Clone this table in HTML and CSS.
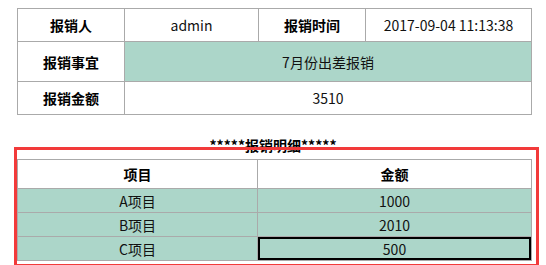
FILE: index.html
```html
<!DOCTYPE html>
<html lang="zh">
<head>
<meta charset="utf-8">
<title>报销单</title>
<link rel="stylesheet" href="styles.css">
</head>
<body>
<div class="page">
  <table class="info">
    <colgroup>
      <col class="c1"><col class="c2"><col class="c3"><col class="c4">
    </colgroup>
    <tr class="r-short">
      <th>报销人</th>
      <td>admin</td>
      <th>报销时间</th>
      <td>2017-09-04 11:13:38</td>
    </tr>
    <tr class="r-tall">
      <th>报销事宜</th>
      <td colspan="3" class="teal">7月份出差报销</td>
    </tr>
    <tr class="r-short">
      <th>报销金额</th>
      <td colspan="3">3510</td>
    </tr>
  </table>

  <div class="title">*****报销明细*****</div>

  <div class="frame">
    <table class="detail">
      <colgroup>
        <col class="d1"><col class="d2">
      </colgroup>
      <tr class="head">
        <th>项目</th>
        <th>金额</th>
      </tr>
      <tr class="row">
        <td>A项目</td>
        <td>1000</td>
      </tr>
      <tr class="row">
        <td>B项目</td>
        <td>2010</td>
      </tr>
      <tr class="row">
        <td>C项目</td>
        <td class="selected">500</td>
      </tr>
    </table>
  </div>
</div>
</body>
</html>
```

FILE: styles.css
```css
html, body {
  margin: 0;
  padding: 0;
  background: #fff;
}

body {
  font-family: "Noto Sans CJK SC", "Noto Sans", sans-serif;
  font-size: 14px;
  color: #111;
}

.page {
  padding: 8px 0 0 14px;
}

table {
  border-collapse: collapse;
  table-layout: fixed;
}

th, td {
  border: 1px solid #aaa;
  padding: 0;
  text-align: center;
  vertical-align: middle;
  line-height: 20px;
}

th {
  font-weight: bold;
  color: #000;
}

.info {
  margin-left: 3px;
  width: 514px;
}

.info .c1 { width: 107px; }
.info .c2 { width: 134px; }
.info .c3 { width: 107px; }
.info .c4 { width: 166px; }

.info .r-short th,
.info .r-short td { height: 32px; }

.info .r-tall th,
.info .r-tall td { height: 39px; }

.teal {
  background: #acd6c9;
}

.title {
  margin-top: 20px;
  text-align: center;
  width: 518px;
  font-weight: bold;
  color: #000;
  line-height: 20px;
}

.frame {
  position: relative;
  margin-top: -8px;
  width: 519px;
  border: 3px solid #f23a3a;
  padding: 9px 0 3px 0;
}

.detail {
  width: 514px;
}

.detail .d1 { width: 240px; }
.detail .d2 { width: 274px; }

.detail .head th {
  height: 28px;
  background: #fff;
}

.detail .row td {
  height: 23px;
  background: #acd6c9;
}

.detail .selected {
  box-shadow: inset 0 0 0 2px #000;
}
```
